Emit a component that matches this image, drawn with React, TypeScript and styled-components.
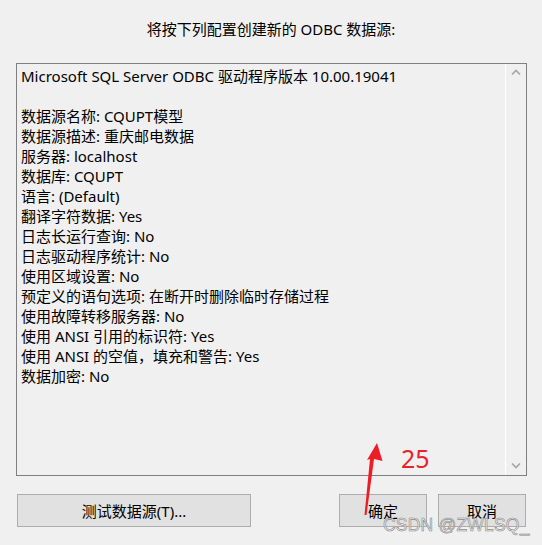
import React from "react";
import styled, { createGlobalStyle } from "styled-components";

const Global = createGlobalStyle`
  html, body { margin: 0; padding: 0; background: #f0f0f0; }
  body { font-family: "Noto Sans", "Noto Sans CJK SC", sans-serif; }
`;

const Dialog = styled.div`
  position: relative;
  width: 542px;
  height: 545px;
  background: #f0f0f0;
  display: flex;
  flex-direction: column;
  color: #000;
  font-family: "Noto Sans", "Noto Sans CJK SC", sans-serif;
  font-size: 15px;
  overflow: hidden;
`;

const Title = styled.div`
  margin-top: 19px;
  height: 20px;
  line-height: 20px;
  text-align: center;
`;

const InfoBox = styled.div`
  margin: 24px 15px 0 16px;
  height: 413px;
  box-sizing: border-box;
  border: 1px solid #7f7f7f;
  display: flex;
`;

const Content = styled.div`
  flex: 1;
  padding: 2px 4px;
  line-height: 20px;
  white-space: pre;
`;

const Line = styled.div`
  height: 20px;
`;

const ScrollBar = styled.div`
  width: 20px;
  border-left: 1px solid #ffffff;
  display: flex;
  flex-direction: column;
  justify-content: space-between;
  align-items: center;
  padding: 5px 0 6px;
`;

const Chevron = styled.svg`
  display: block;
`;

const ButtonRow = styled.div`
  margin: 18px 16px 0 17px;
  display: flex;
  align-items: center;
`;

const Button = styled.div<{ $w: number }>`
  width: ${(p) => p.$w}px;
  height: 33px;
  box-sizing: border-box;
  border: 1px solid #adadad;
  background: #e1e1e1;
  display: flex;
  align-items: center;
  justify-content: center;
  font-size: 15px;
`;

const Spacer = styled.div`
  flex: 1;
`;

const Gap = styled.div`
  width: 11px;
`;

const Overlay = styled.svg`
  position: absolute;
  left: 0;
  top: 0;
  pointer-events: none;
`;

const Badge = styled.div`
  position: absolute;
  left: 401px;
  top: 441px;
  color: #e8232b;
  font-family: "Noto Sans", sans-serif;
  font-size: 25px;
  line-height: 34px;
`;

const Watermark = styled.div`
  position: absolute;
  left: 383px;
  top: 513px;
  color: rgba(235, 235, 235, 0.9);
  font-family: "Liberation Sans", Arial, sans-serif;
  font-size: 17.5px;
  line-height: 24px;
  -webkit-text-stroke: 0.6px #8a8a8a;
  letter-spacing: 0.2px;
`;

const lines = [
  "Microsoft SQL Server ODBC 驱动程序版本 10.00.19041",
  "",
  "数据源名称: CQUPT模型",
  "数据源描述: 重庆邮电数据",
  "服务器: localhost",
  "数据库: CQUPT",
  "语言: (Default)",
  "翻译字符数据: Yes",
  "日志长运行查询: No",
  "日志驱动程序统计: No",
  "使用区域设置: No",
  "预定义的语句选项: 在断开时删除临时存储过程",
  "使用故障转移服务器: No",
  "使用 ANSI 引用的标识符: Yes",
  "使用 ANSI 的空值，填充和警告: Yes",
  "数据加密: No",
];

export default function App() {
  return (
    <Dialog>
      <Global />
      <Title>将按下列配置创建新的 ODBC 数据源:</Title>
      <InfoBox>
        <Content>
          {lines.map((l, i) => (
            <Line key={i}>{l}</Line>
          ))}
        </Content>
        <ScrollBar>
          <Chevron width="10" height="6" viewBox="0 0 10 6">
            <path d="M1 5.5 L5 1.5 L9 5.5" fill="none" stroke="#a6a6a6" strokeWidth="1.6" />
          </Chevron>
          <Chevron width="10" height="6" viewBox="0 0 10 6">
            <path d="M1 0.5 L5 4.5 L9 0.5" fill="none" stroke="#a6a6a6" strokeWidth="1.6" />
          </Chevron>
        </ScrollBar>
      </InfoBox>
      <ButtonRow>
        <Button $w={234}>测试数据源(T)...</Button>
        <Spacer />
        <Button $w={88}>确定</Button>
        <Gap />
        <Button $w={88}>取消</Button>
      </ButtonRow>
      <Overlay width="542" height="545" viewBox="0 0 542 545">
        <path
          d="M364.5 515 L370 459 L367 460 L377 443 L382.5 461 L374 459 L366.5 515 Z"
          fill="#ee1c25"
        />
      </Overlay>
      <Badge>25</Badge>
      <Watermark>CSDN @ZWLSQ_</Watermark>
    </Dialog>
  );
}
